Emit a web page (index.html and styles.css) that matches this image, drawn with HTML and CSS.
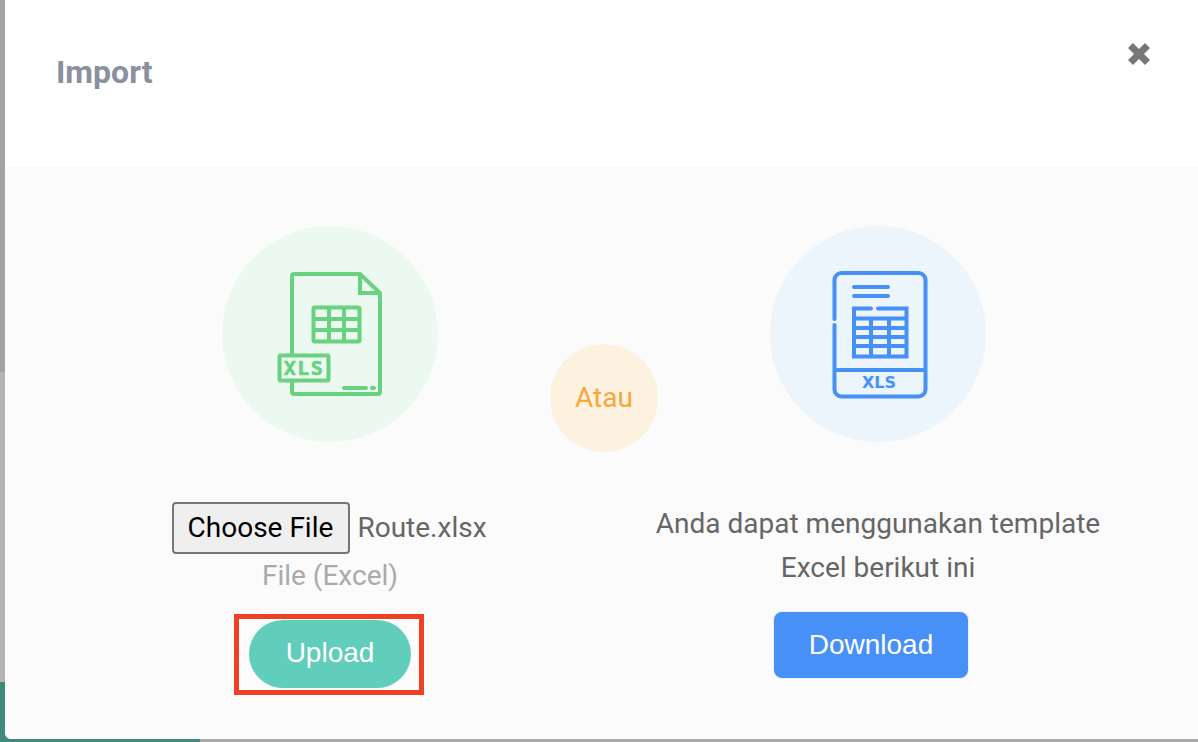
FILE: index.html
```html
<!DOCTYPE html>
<html lang="en">
<head>
    <meta charset="UTF-8">
    <meta name="viewport" content="width=device-width, initial-scale=1.0">
    <title>Import</title>
    <link rel="stylesheet" href="styles.css">
</head>
<body>
    <div class="page-strip"></div>
    <div class="page-bar"></div>

    <div class="modal">
        <header class="modal-header">
            <h1 class="modal-title">Import</h1>
            <button class="close-btn" type="button" aria-label="Close">
                <svg width="24" height="24" viewBox="0 0 24 24">
                    <path d="M3.500 3.500 L20.500 20.500 M20.500 3.500 L3.500 20.500" stroke="#777" stroke-width="7" fill="none"/>
                </svg>
            </button>
        </header>

        <main class="modal-body">
            <section class="col">
                <div class="circle circle-green">
                    <svg class="icon icon-green" width="216" height="216" viewBox="0 0 216 216">
                        <path d="M70 129 V50 a2 2 0 0 1 2 -2 H138 L158 67 V166 a2 2 0 0 1 -2 2 H72 a2 2 0 0 1 -2 -2 V156"/>
                        <path d="M138 48 V67 H158"/>
                        <rect x="91.500" y="81.500" width="46" height="34" rx="1"/>
                        <path d="M107 82 V115 M122 82 V115 M92 93 H137 M92 104 H137"/>
                        <rect x="57.500" y="129.500" width="49" height="25" rx="1"/>
                        <path d="M122 162 H144 M150 162 H152" stroke-linecap="round"/>
                        <text class="icon-label" x="82" y="149" text-anchor="middle">XLS</text>
                    </svg>
                </div>
                <div class="file-row">
                    <button class="file-btn" type="button">Choose File</button>
                    <span class="file-name">Route.xlsx</span>
                </div>
                <p class="file-hint">File (Excel)</p>
                <div class="upload-mark">
                    <button class="upload-btn" type="button">Upload</button>
                </div>
            </section>

            <div class="or-circle">Atau</div>

            <section class="col">
                <div class="circle circle-blue">
                    <svg class="icon icon-blue" width="216" height="216" viewBox="0 0 216 216">
                        <path d="M64.500 93 V54 a7 7 0 0 1 7 -7 H148.500 a7 7 0 0 1 7 7 V163.500 a7 7 0 0 1 -7 7 H71.500 a7 7 0 0 1 -7 -7 V99" stroke-linecap="round"/>
                        <path d="M65 144 H155"/>
                        <path d="M84 61 H118 M84 70 H118" stroke-linecap="round"/>
                        <path d="M101 82.500 H84 V130.500 H136.500 V82.500 H108" stroke-linecap="round"/>
                        <path d="M84 92.500 H136 M84 102 H136 M84 111 H136 M84 120 H136 M101 92 V130 M119 92 V130"/>
                        <text class="icon-label" x="109" y="162" text-anchor="middle">XLS</text>
                    </svg>
                </div>
                <p class="template-text">Anda dapat menggunakan template<br>Excel berikut ini</p>
                <button class="download-btn" type="button">Download</button>
            </section>
        </main>
    </div>
</body>
</html>
```

FILE: styles.css
```css
body {
    margin: 0;
    height: 742px;
    overflow: hidden;
    position: relative;
    background-color: #a9a9a9;
    font-family: 'Roboto', sans-serif;
    color: #666;
}

button {
    font-family: inherit;
    cursor: pointer;
}

p {
    margin: 0;
}

.page-strip {
    position: absolute;
    left: 0;
    top: 0;
    width: 5px;
    height: 682px;
    background: linear-gradient(to bottom, #a3a3a3 372px, #b4b4b4 372px);
}

.page-bar {
    position: absolute;
    left: 0;
    bottom: 0;
    width: 200px;
    height: 60px;
    background-color: #3f8a7c;
}

.modal {
    position: relative;
    margin-left: 5px;
    height: 739px;
    background-color: #fff;
    border-bottom-left-radius: 6px;
    overflow: hidden;
    display: flex;
    flex-direction: column;
}

.modal-header {
    height: 166px;
    flex-shrink: 0;
    display: flex;
    justify-content: space-between;
    align-items: flex-start;
    padding: 0 47px 0 51px;
    box-sizing: border-box;
}

.modal-title {
    margin: 52px 0 0;
    font-size: 32px;
    line-height: 40px;
    font-weight: 700;
    color: #8b90a0;
}

.close-btn {
    margin-top: 42px;
    padding: 0;
    border: none;
    background: none;
    height: 24px;
}

.modal-body {
    flex: 1;
    background-color: #fbfbfb;
    padding-left: 105px;
    display: flex;
    align-items: flex-start;
}

.col {
    width: 440px;
    padding-top: 60px;
    display: flex;
    flex-direction: column;
    align-items: center;
}

.circle {
    width: 216px;
    height: 216px;
    border-radius: 50%;
    margin-bottom: 60px;
}

.circle-green {
    background-color: #ecf9f1;
}

.circle-blue {
    background-color: #ebf5fb;
}

.icon {
    display: block;
    fill: none;
    stroke-width: 4;
}

.icon-green {
    stroke: #69d27f;
}

.icon-blue {
    stroke: #4690f8;
}

.icon-label {
    font-weight: 700;
    stroke: none;
}

.icon-green .icon-label {
    fill: #69d27f;
    stroke: #69d27f;
    stroke-width: 0.6;
    font-family: 'DejaVu Sans Mono', monospace;
    font-size: 20px;
    letter-spacing: 1.5px;
}

.icon-blue .icon-label {
    fill: #4690f8;
    font-family: 'DejaVu Sans', sans-serif;
    font-size: 16px;
}

.file-row {
    display: flex;
    align-items: center;
    gap: 7px;
    height: 52px;
    margin-right: 1px;
}

.file-btn {
    height: 52px;
    width: 178px;
    padding: 0 2px 1px 0;
    font-size: 28px;
    color: #000;
    background-color: #efefef;
    border: 2px solid #767676;
    border-radius: 4px;
}

.file-name {
    font-size: 28px;
    padding-bottom: 1px;
}

.file-hint {
    margin-top: 2px;
    font-size: 28px;
    line-height: 40px;
    color: #aaa;
}

.upload-mark {
    margin-top: 18px;
    margin-right: 2px;
    padding: 1px 8px 2px 10px;
    border: 5px solid #ee4023;
    display: flex;
}

.upload-btn {
    width: 162px;
    height: 68px;
    padding: 0 0 3px;
    border: none;
    border-radius: 34px;
    background-color: #61cdbb;
    color: #fff;
    font-family: 'Liberation Sans', Arial, sans-serif;
    font-size: 28px;
}

.or-circle {
    width: 108px;
    height: 108px;
    flex-shrink: 0;
    margin-top: 178px;
    padding-bottom: 2px;
    box-sizing: border-box;
    border-radius: 50%;
    background-color: #fdf2e0;
    color: #f5a83c;
    font-size: 28px;
    display: flex;
    align-items: center;
    justify-content: center;
}

.template-text {
    font-size: 28px;
    line-height: 44px;
    text-align: center;
    white-space: nowrap;
}

.download-btn {
    margin-top: 21px;
    margin-right: 14px;
    width: 196px;
    height: 68px;
    border: 1px solid #f0f0f0;
    border-radius: 9px;
    background-color: #4690f8;
    color: #fff;
    font-family: 'Liberation Sans', Arial, sans-serif;
    font-size: 28px;
}
```
